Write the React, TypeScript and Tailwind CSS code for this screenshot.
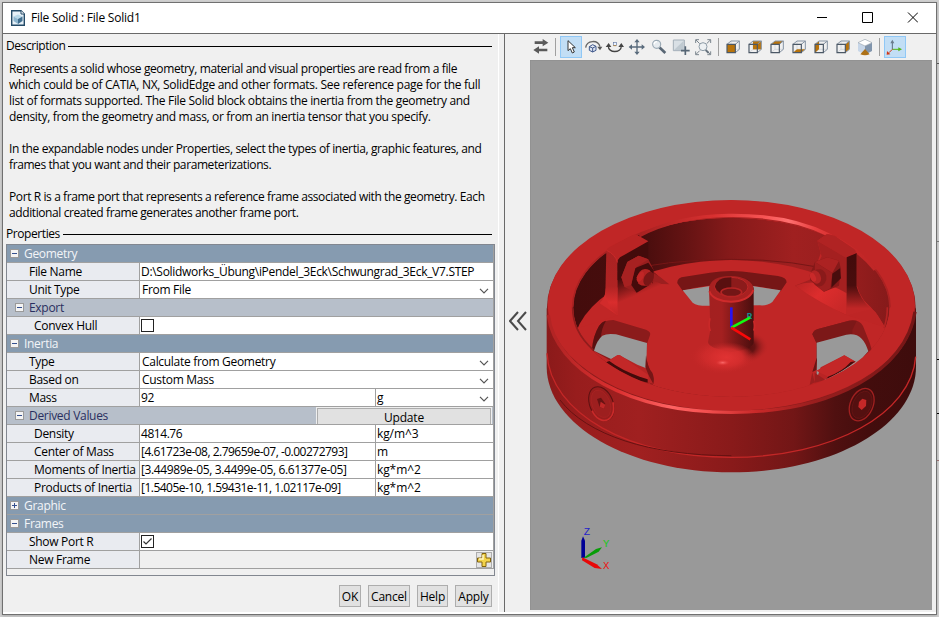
import type { ReactNode } from "react";

const lines: [string, string][] = [
  ["Represents a solid whose geometry, material and visual properties are read from a file", "tracking-[-0.395px]"],
  ["which could be of CATIA, NX, SolidEdge and other formats. See reference page for the full", "tracking-[-0.29px]"],
  ["list of formats supported. The File Solid block obtains the inertia from the geometry and", "tracking-[-0.32px]"],
  ["density, from the geometry and mass, or from an inertia tensor that you specify.", "tracking-[-0.325px]"],
  ["", ""],
  ["In the expandable nodes under Properties, select the types of inertia, graphic features, and", "tracking-[-0.385px]"],
  ["frames that you want and their parameterizations.", "tracking-[-0.4px]"],
  ["", ""],
  ["Port R is a frame port that represents a reference frame associated with the geometry. Each", "tracking-[-0.4px]"],
  ["additional created frame generates another frame port.", "tracking-[-0.4px]"],
];

function Legend({ children }: { children: ReactNode }) {
  return (
    <div className="flex h-4 items-center gap-[3px] pr-[5px] pl-[3px] tracking-[-0.42px]">
      <span>{children}</span>
      <span className="h-px grow bg-black" />
    </div>
  );
}

function Toggle({ plus }: { plus?: boolean }) {
  return (
    <svg className="h-[9px] w-[9px] shrink-0" viewBox="0 0 9 9" shapeRendering="crispEdges">
      <rect width="9" height="9" fill="#9a9a9a" />
      <rect x="1" y="1" width="7" height="7" fill="#f4f4f4" />
      <rect x="2" y="4" width="5" height="1" fill="#34508f" />
      {plus && <rect x="4" y="2" width="1" height="5" fill="#34508f" />}
    </svg>
  );
}

function Section({ title, plus }: { title: string; plus?: boolean }) {
  return (
    <div className="flex h-[18px] items-center gap-[5px] border-b border-[#a0a0a0] bg-[#869bb0] pl-[3px] text-[#f3f5f8]">
      <Toggle plus={plus} />
      <span>{title}</span>
    </div>
  );
}

function Sub({ title, button }: { title: string; button?: string }) {
  return (
    <div className="flex h-[18px] items-center gap-[5px] border-b border-[#a0a0a0] bg-[#b7bfca] pl-2 text-[#2a2f60]">
      <Toggle />
      <span className="grow">{title}</span>
      {button && (
        <span className="mr-[1px] flex h-[17px] w-[176px] border-t border-r border-l border-[#efefef] bg-[#e1e1e1] text-black">
          <span className="grow border border-b-0 border-[#adadad] text-center leading-[17px] tracking-[-0.2px]">{button}</span>
        </span>
      )}
    </div>
  );
}

function Row({ label, value, unit, select, deep, tight = "", children }: {
  label: string; value?: string; unit?: string; select?: boolean; deep?: boolean; tight?: string; children?: ReactNode;
}) {
  const chevron = (
    <svg className="mt-[3px] mr-1 h-[6px] w-[10px] shrink-0" viewBox="0 0 10 6">
      <path d="M1 .8 5 4.8 9 .8" fill="none" stroke="#555" strokeWidth="1.2" />
    </svg>
  );
  return (
    <div className="flex h-[18px] border-b border-[#a0a0a0] bg-white leading-[17px] whitespace-nowrap">
      <div className={`w-[133px] shrink-0 border-r border-[#a0a0a0] bg-[#e9ebf0] ${deep ? "pl-[27px]" : "pl-[22px]"}`}>{label}</div>
      {children ?? (
        <div className={`flex min-w-0 grow items-center justify-between ${select && !unit ? "pl-[2px]" : "pl-px"}`}>
          <span className={tight}>{value}</span>
          {select && !unit && chevron}
        </div>
      )}
      {unit && (
        <div className="flex w-[118px] shrink-0 items-center justify-between border-l border-[#a0a0a0] pl-px tracking-[-0.1px]">
          <span>{unit}</span>
          {select && chevron}
        </div>
      )}
    </div>
  );
}

function Check({ on }: { on?: boolean }) {
  return (
    <div className="flex grow items-center pl-px">
      <svg className="h-[13px] w-[13px]" viewBox="0 0 13 13">
        <rect x=".5" y=".5" width="12" height="12" fill="#fff" stroke="#222" />
        {on && <path d="M2.5 6.5 5 9 10.5 3.5" fill="none" stroke="#333" strokeWidth="1.2" />}
      </svg>
    </div>
  );
}

function Tool({ active, children }: { active?: boolean; children: ReactNode }) {
  return (
    <span className={`h-[22px] w-[22px] shrink-0 ${active ? "bg-[#c2def5] outline-1 -outline-offset-1 outline-[#90c8f6]" : ""}`}>
      <svg className="h-[22px] w-[22px]" viewBox="0 0 66 66" fill="none">{children}</svg>
    </span>
  );
}

function Divider({ className }: { className: string }) {
  return <span className={`h-[18px] w-px shrink-0 bg-[#a0a0a0] ${className}`} />;
}

const faces: Record<string, string> = {
  front: "M15 25H40V50H15Z",
  back: "M27 15H52V40H27Z",
  top: "M15 25 27 15H52L40 25Z",
  bottom: "M15 50 27 40H52L40 50Z",
  left: "M15 25 27 15V40L15 50Z",
  right: "M40 25 52 15V40L40 50Z",
};

function Cube({ face }: { face: string }) {
  return (
    <Tool>
      <path d="M27 15V40H52M27 40 15 50" stroke="#c9ced4" strokeWidth="2" />
      <path d={faces[face]} fill="#b8730b" />
      <path d="M15 25 27 15H52V40L40 50M40 25 52 15" stroke="#8593a3" strokeWidth="3" />
      <path d="M15 25H40V50H15Z" stroke="#4b5866" strokeWidth="3.5" />
    </Tool>
  );
}

function Toolbar() {
  return (
    <div className="flex h-[26px] items-center pb-px">
      <Tool>
        <path d="M14 16H38V9L55 20 38 31V24H14Z" fill="#5a5a5a" />
        <path d="M52 38H27V31L10 42 27 53V46H52Z" fill="#5a5a5a" />
      </Tool>
      <Divider className="mr-1 ml-[3px]" />
      <Tool active>
        <path d="M24 14V44L31 38 37 51 43 48 37 35H46Z" fill="#fff" stroke="#333" strokeWidth="3" />
      </Tool>
      <Tool>
        <path d="M11 35C14 12 48 10 54 32" stroke="#666" strokeWidth="4" />
        <path d="M46 32H61L54 43Z" fill="#555" />
        <path d="M22 32 32 26 42 31V43L32 48 22 43ZM22 32 32 36 42 31M32 36V48" fill="#dbe3f1" stroke="#40588b" strokeWidth="3" />
      </Tool>
      <Tool>
        <path d="M13 30C12 52 52 52 52 30" stroke="#444" strokeWidth="4" />
        <path d="M5 33 14 21 22 33ZM43 33 52 21 60 33Z" fill="#444" />
        <rect x="28" y="19" width="9" height="9" fill="#edf3ff" stroke="#667ba5" strokeWidth="2" />
        <path d="M28 29H37" stroke="#b8730b" strokeWidth="2" />
      </Tool>
      <Tool>
        <path d="M33 15V52M14 33H51" stroke="#596b7c" strokeWidth="4" />
        <path d="M25 19 33 9 41 19ZM25 47 33 57 41 47ZM18 25 8 33 18 41ZM47 25 57 33 47 41Z" fill="#596b7c" />
      </Tool>
      <Tool>
        <path d="M34 34 52 51" stroke="#596775" strokeWidth="8" />
        <circle cx="26" cy="25" r="12" fill="#e6ebef" stroke="#9baab5" strokeWidth="3.5" />
        <path d="M18 25Q19 17 27 17" stroke="#fff" strokeWidth="4" />
      </Tool>
      <Tool>
        <path d="M10 12H43V44H10Z" fill="#d9e0e5" stroke="#a4afb9" strokeWidth="3" />
        <path d="M12 42 41 14V42Z" fill="#bfc9d0" />
        <path d="M46 31V57M33 44H59" stroke="#566675" strokeWidth="5" />
      </Tool>
      <Tool>
        <path d="M11 21V11H21M46 11H56V21M56 46V56H46M21 56H11V46M12 12 23 23M55 12 44 23M12 55 23 44M55 55 44 44" stroke="#7b858e" strokeWidth="3" />
        <path d="M40 41 50 51" stroke="#66727d" strokeWidth="6" />
        <circle cx="33" cy="32" r="12" fill="#eef1f3" stroke="#8f9da8" strokeWidth="3" />
      </Tool>
      <Divider className="mr-[3px] ml-1" />
      <Cube face="front" /><Cube face="back" /><Cube face="top" />
      <Cube face="bottom" /><Cube face="left" /><Cube face="right" />
      <Tool>
        <path d="M12 20 33 28V56L12 45Z" fill="#c7d6e8" />
        <path d="M54 20 33 28V56L54 45Z" fill="#8195ad" />
        <path d="M12 20 33 10 54 20 33 30Z" fill="#fff" stroke="#9aa5af" strokeWidth="2" />
        <path d="M33 39 19 55Q33 61 47 55Z" fill="#ad7117" />
      </Tool>
      <Divider className="mr-[4px] ml-[3px]" />
      <Tool active>
        <path d="M25 40V15" stroke="#5b6c80" strokeWidth="3" />
        <path d="M19 22 25 11 31 22Z" fill="#6a7b8c" />
        <path d="M25 40H48" stroke="#52b51c" strokeWidth="3" />
        <path d="M43 34V46L54 40Z" fill="#52b51c" />
        <path d="M25 40 15 50" stroke="#d23615" strokeWidth="3" />
        <path d="M9 45 19 55 8 56Z" fill="#d23615" />
      </Tool>
    </div>
  );
}

function Wheel() {
  return (
    <svg className="block h-[550px] w-[402px]" viewBox="0 -360 1206 1650">
      <defs>
        <linearGradient id="side" gradientUnits="userSpaceOnUse" x1="51" x2="1158" y1="0" y2="0">
          <stop offset="0" stopColor="#8b1a1a" /><stop offset=".08" stopColor="#981d1d" />
          <stop offset=".25" stopColor="#a02020" /><stop offset=".5" stopColor="#891a1a" />
          <stop offset=".67" stopColor="#721616" /><stop offset=".78" stopColor="#501010" />
          <stop offset=".87" stopColor="#430d0d" /><stop offset="1" stopColor="#3e0c0c" />
        </linearGradient>
        <linearGradient id="wall" gradientUnits="userSpaceOnUse" x1="128" x2="1075" y1="0" y2="0">
          <stop offset="0" stopColor="#440c0c" /><stop offset=".22" stopColor="#470d0d" />
          <stop offset=".36" stopColor="#651313" /><stop offset=".5" stopColor="#861a1a" />
          <stop offset=".7" stopColor="#a02020" /><stop offset=".87" stopColor="#981e1e" />
          <stop offset="1" stopColor="#861a1a" />
        </linearGradient>
        <linearGradient id="backLight" gradientUnits="userSpaceOnUse" x1="330" x2="1060" y1="0" y2="0">
          <stop offset="0" stopColor="#a82121" /><stop offset=".3" stopColor="#d83030" />
          <stop offset=".52" stopColor="#f85656" /><stop offset=".61" stopColor="#ff7070" />
          <stop offset=".72" stopColor="#e83e3e" /><stop offset=".85" stopColor="#c72828" /><stop offset="1" stopColor="#bd2626" />
        </linearGradient>
        <linearGradient id="frontLight" gradientUnits="userSpaceOnUse" x1="80" x2="1150" y1="0" y2="0">
          <stop offset="0" stopColor="#b32424" /><stop offset=".17" stopColor="#dc3030" />
          <stop offset=".32" stopColor="#ff6262" /><stop offset=".4" stopColor="#f85555" />
          <stop offset=".56" stopColor="#c92929" /><stop offset=".72" stopColor="#9a1e1e" /><stop offset="1" stopColor="#741616" />
        </linearGradient>
        <linearGradient id="hub" x1="0" x2="1" y1="0" y2="0">
          <stop offset="0" stopColor="#a32020" /><stop offset=".3" stopColor="#a42020" />
          <stop offset=".62" stopColor="#791717" /><stop offset="1" stopColor="#4a0e0e" />
        </linearGradient>
        <linearGradient id="fillet" x1="0" x2="1" y1="0" y2=".6">
          <stop offset="0" stopColor="#b82424" /><stop offset=".5" stopColor="#dd2d2d" /><stop offset="1" stopColor="#c92828" />
        </linearGradient>
        <linearGradient id="post" x1="0" x2="0" y1="0" y2="1">
          <stop offset="0" stopColor="#a92222" /><stop offset=".55" stopColor="#b02323" /><stop offset=".8" stopColor="#d92d2d" /><stop offset="1" stopColor="#c02626" />
        </linearGradient>
        <linearGradient id="postDark" gradientUnits="userSpaceOnUse" x1="0" x2="0" y1="232" y2="385">
          <stop offset="0" stopColor="#430b0b" /><stop offset=".55" stopColor="#490d0d" /><stop offset="1" stopColor="#c02626" />
        </linearGradient>
        <linearGradient id="plateDark" gradientUnits="userSpaceOnUse" x1="285" x2="310" y1="290" y2="350">
          <stop offset="0" stopColor="#430b0b" /><stop offset="1" stopColor="#c02626" />
        </linearGradient>
        <radialGradient id="base"><stop offset="0" stopColor="#e23333" /><stop offset=".55" stopColor="#d42d2d" /><stop offset="1" stopColor="#c02626" stopOpacity="0" /></radialGradient>
        <radialGradient id="glow"><stop offset="0" stopColor="#fb6a6a" /><stop offset="1" stopColor="#e63535" stopOpacity="0" /></radialGradient>
        <radialGradient id="shade"><stop offset="0" stopColor="#3e0a0a" /><stop offset=".5" stopColor="#551010" stopOpacity=".85" /><stop offset="1" stopColor="#c02626" stopOpacity="0" /></radialGradient>
        <clipPath id="bore"><ellipse cx="604" cy="382" rx="475" ry="269" /></clipPath>
      </defs>
      <rect y="-360" width="1206" height="1650" fill="#999" />
      <path d="M0 1290V-360H1206" fill="none" stroke="#8c8c8c" strokeWidth="3" />

      <path d="M50 385V560C50 735 298 877 604 877S1158 735 1158 560V385Z" fill="url(#side)" />
      <path d="M51 520C60 700 298 832 604 832S1145 700 1157 530" fill="none" stroke="#c32727" strokeWidth="4" />
      <path d="M90 660C170 765 360 827 604 827" fill="none" stroke="#671212" strokeWidth="3" />
      <ellipse cx="604" cy="382" rx="553" ry="320" fill="#8d1c1c" />
      <ellipse cx="604" cy="376" rx="551" ry="316" fill="#c02626" />
      <path d="M55 405C75 570 298 697 604 697S1130 570 1155 395" fill="none" stroke="url(#frontLight)" strokeWidth="10" />

      <g clipPath="url(#bore)">
        <ellipse cx="604" cy="382" rx="475" ry="269" fill="url(#wall)" />
        <ellipse cx="604" cy="509" rx="475" ry="269" fill="#c02626" />
        <path d="M240 280Q410 238 604 238T940 280" fill="none" stroke="#761616" strokeWidth="3" />

        <path d="M442 310Q440 292 464 290L540 278Q604 268 668 278L744 288Q770 292 770 307L752 334Q604 292 458 332Z" fill="#761616" />
        <path d="M458 331 545 317H662L752 331 727 366Q712 378 690 376L545 377Q505 380 488 368Z" fill="#999" />

        <path d="M186 510Q188 470 207 438Q218 420 250 420L348 449Q364 456 360 466L352 488 348 525Q352 560 372 598L368 615Z" fill="#8b1b1b" />
        <path d="M186 510Q188 470 207 438Q215 425 228 422Q213 447 213 474L194 512Z" fill="#5a1010" />
        <path d="M192 512Q201 480 217 467Q232 459 258 463L351 489 348 580 300 565Z" fill="#999" />
        <path d="M230 545 262 526Q268 523 277 530L322 554 345 563Q364 570 370 590L371 612 350 606Z" fill="#b52424" />
        <path d="M230 545 262 526Q268 523 277 530L355 585V600L330 592Z" fill="#c32828" />
        <path d="M228 547Q275 580 330 602L353 608V598L329 590Q275 571 238 543Z" fill="#430b0b" />
        <path d="M348 525Q352 562 367 578Q374 594 370 612L357 588 346 562Z" fill="#751616" />

        <g transform="translate(597 0)">
          <path d="M250 463Q254 450 267 447L360 422Q390 416 402 438L422 488 430 515 262 600 262 488Z" fill="#8b1b1b" />
          <path d="M250 463Q254 450 267 447L360 422Q375 421 383 423L370 450 370 461 262 488Z" fill="#7c1818" />
          <path d="M263 488 352 464Q382 459 398 476Q410 488 418 514L340 600H263Z" fill="#999" />
          <path d="M262 600 275 562 346 526 380 545 292 600 244 616Z" fill="#b92424" />
          <path d="M346 526 380 545 300 592 262 572Z" fill="#c42727" />
          <path d="M379 544Q345 574 292 597L297 590Q340 575 365 546Z" fill="#430b0b" />
          <path d="M250 577 257 607 242 615ZM257 578 290 600 257 608Z" fill="#9c1f1f" />
          <path d="M262 488 264 540 262 570 250 576 258 550 264 530Z" fill="#6b1414" />
        </g>
      </g>
      <path d="M128 382C128 233 341 111 604 111S1080 233 1080 382" fill="none" stroke="#a92222" strokeWidth="5" />
      <path d="M328 167Q440 108 597 106Q775 104 895 164Q985 206 1035 269" fill="none" stroke="url(#backLight)" strokeWidth="10" />
      <path d="M128 382Q127 454 190 510" fill="none" stroke="#901c1c" strokeWidth="5" />
      <path d="M1072 382Q1072 415 1062 444" fill="none" stroke="#b22323" strokeWidth="5" />

      <path d="M262 237 355 184V270L374 278 415 313 340 360 262 405Z" fill="url(#plateDark)" />
      <path d="M366 276Q392 290 418 313L395 312 366 300Z" fill="#9c1f1f" />
      <path d="M230 213Q229 207 237 202L310 164Q318 162 326 167L355 184 270 232Q262 239 262 250Z" fill="#b92424" />
      <path d="M228 323V350L262 406 205 425 148 443Q174 400 209 370Q228 350 228 323Z" fill="#c02626" />
      <path d="M209 370Q228 350 228 323L262 300V406Z" fill="#d22b2b" />
      <path d="M229 212Q258 222 262 250V406L240 385 226 345Z" fill="url(#post)" />
      <path d="M230 211Q257 224 262 247" stroke="#c92929" strokeWidth="3" fill="none" />
      <path d="M274 292 292 246 326 227 355 238 371 270 366 309 320 338 284 322Z" fill="#981e1e" />
      <path d="M292 246 326 227 355 238 314 265Z" fill="#a82121" />
      <path d="M314 265 355 248 371 271 368 309 320 338 304 315Z" fill="#450b0b" />
      <path d="M274 292 292 246 326 228 340 240 316 265 303 315 284 322Z" fill="#a72121" />
      <path d="M320 292 329 275Q340 262 359 271L372 290 366 311Q343 324 325 311Z" fill="#b12222" />
      <ellipse cx="356" cy="296" rx="14" ry="22" transform="rotate(27 356 296)" fill="#781616" />
      <ellipse cx="331" cy="290" rx="9" ry="17" transform="rotate(27 331 290)" fill="#c02626" />

      <g transform="translate(597 0)">
        <path d="M265 182 293 163Q300 160 317 167L372 206Q384 213 384 226V318Q395 360 440 397L468 442 352 405Q265 365 198 317L246 300 275 220Z" fill="#be2525" />
        <path d="M265 182 353 233V405Q293 375 198 317L242 299 278 229Z" fill="#a42020" />
        <path d="M198 317Q270 290 353 340V405Q275 370 198 317Z" fill="url(#fillet)" />
        <path d="M265 182 293 163 317 167 375 207Q384 215 378 219L353 235Z" fill="#b02323" />
        <path d="M353 232 383 219V320Q392 353 425 387L353 406Z" fill="url(#postDark)" />
        <path d="M247 273 258 246 295 232 330 242 336 267 330 317 285 335 258 314Z" fill="#851919" />
        <path d="M258 246 295 232 330 242 310 279Z" fill="#ac2222" />
        <path d="M258 246 310 279 304 325 285 335 256 312Z" fill="#9e1f1f" />
        <path d="M310 281 333 265 336 295 307 323Z" fill="#480d0d" />
        <path d="M242 285Q251 267 276 268Q295 277 292 299Q283 324 263 318L244 301Z" fill="#8a1a1a" />
        <ellipse cx="260" cy="291" rx="15" ry="21" transform="rotate(-25 260 291)" fill="#b22424" />
        <ellipse cx="252" cy="292" rx="8" ry="14" transform="rotate(-25 252 292)" fill="#c92929" />
      </g>

      <ellipse cx="632" cy="500" rx="85" ry="52" fill="url(#shade)" />
      <ellipse cx="575" cy="530" rx="95" ry="54" fill="url(#base)" opacity=".8" />
      <path d="M537 325Q542 288 603 288T671 325V483Q674 507 603 516Q535 505 534 486L540 455V415Z" fill="url(#hub)" />
      <ellipse cx="590" cy="532" rx="85" ry="46" fill="url(#base)" opacity=".9" />
      <ellipse cx="604" cy="327" rx="67" ry="39" fill="#a82121" />
      <path d="M538 334C550 374 655 378 670 330" fill="none" stroke="#ce2b2b" strokeWidth="6" />
      <ellipse cx="604" cy="321" rx="50" ry="29" fill="#8c1b1b" stroke="#bd2626" strokeWidth="3" />
      <path d="M555 320Q560 292 604 292V349Q563 344 555 320Z" fill="#591010" />
      <ellipse cx="604" cy="337" rx="31" ry="13" fill="#731616" stroke="#b52424" strokeWidth="5" />
      <ellipse cx="578" cy="548" rx="22" ry="9" fill="url(#glow)" />
      <path d="M540 415Q534 438 541 453M671 422Q677 440 671 452" stroke="#c92929" strokeWidth="5" fill="none" />

      <g transform="rotate(-22 214 671)">
        <ellipse cx="214" cy="671" rx="35" ry="53" fill="#981d1d" stroke="#5d1111" strokeWidth="3" />
        <path d="M180 680C184 735 238 739 248 680" fill="none" stroke="#c92a2a" strokeWidth="5" />
        <ellipse cx="213" cy="671" rx="27" ry="43" fill="#9d1f1f" stroke="#ac2323" strokeWidth="2" />
      </g>
      <path d="M201 657 213 653 226 671 222 686 209 681Z" fill="#681313" />
      <path d="M209 681 212 665 226 674 222 686Z" fill="#bf2828" />
      <g transform="rotate(24 995 674)">
        <ellipse cx="995" cy="674" rx="34" ry="51" fill="#4b0e0e" stroke="#a02020" strokeWidth="4" />
        <ellipse cx="996" cy="674" rx="27" ry="43" fill="#541010" stroke="#6c1515" strokeWidth="2" />
      </g>
      <path d="M987 666 997 656 1009 660 1008 678 995 690 985 681Z" fill="#c52828" />

      <text x="650" y="417" fill="#168b91" className="font-['Liberation_Mono'] text-[27px] font-bold">R</text>
      <path d="M604 443V382" stroke="#2814ef" strokeWidth="8" />
      <path d="M604 443 660 413" stroke="#11fa11" strokeWidth="8" />
      <path d="M604 443 661 478" stroke="#fa0808" strokeWidth="8" />

      <g transform="translate(90 990)">
        <path d="M64 144V92L69 79 75 92V143Z" fill="#000096" />
        <path d="M71 143 108 117 126 112 116 125 79 144Z" fill="#089d08" />
        <path d="M67 142 110 163 126 177 104 174 66 151Z" fill="#e80808" />
        <g className="font-['Liberation_Mono'] text-[32px]">
          <text x="71" y="76" fill="#2222c9">Z</text>
          <text x="129" y="110" fill="#18c818">Y</text>
          <text x="129" y="178" fill="#ee1111">X</text>
        </g>
      </g>
    </svg>
  );
}

export default function App() {
  return (
    <div className="flex h-[617px] w-[939px] overflow-hidden bg-[#d2d2d2] pt-[2px] pl-[2px] font-['Open_Sans','Noto_Sans',sans-serif] text-[12px] leading-4 tracking-[-0.3px] text-black">
      <div className="flex h-[613px] w-[935px] shrink-0 flex-col border border-[#707070] bg-white shadow-[0_1px_3px_#8888]">
        <header className="flex h-[31px] shrink-0 items-center border-b border-[#696969] pl-2">
          <svg className="h-4 w-[14px]" viewBox="0 0 14 16">
            <path d="M.7.7H10L13.3 4V15.3H.7Z" fill="#e7f1f8" stroke="#244b68" strokeWidth="1.4" />
            <path d="M10 .7V4H13.3" fill="#fff" stroke="#244b68" />
            <path d="M2.5 6.5 7 4.5 11.5 6.5 7 9Z" fill="#b9d9ea" />
            <path d="M2.5 6.5 7 9V14L2.5 11Z" fill="#8eb6cf" /><path d="M7 9 11.5 6.5V11L7 14Z" fill="#416f90" />
          </svg>
          <h1 className="ml-[6px] grow tracking-[-0.22px]">File Solid : File Solid1</h1>
          <svg className="mr-[18px] mb-[2px] h-[11px] w-[101px]" viewBox="0 0 101 11" fill="none" stroke="#000">
            <path d="M0 5.5H10M45.500 .5H55.500V10.500H45.500Z" /><path d="M91 .5 101 10.500M101 .5 91 10.500" />
          </svg>
        </header>
        <div className="flex h-[578px] shrink-0 bg-[#f0f0f0]">
          <section className="flex w-[496px] shrink-0 flex-col border-r border-white pt-1 pr-px">
            <Legend>Description</Legend>
            <div className="flex h-[172px] flex-col pt-[7px] pl-[6px] whitespace-nowrap">
              {lines.map(([line, tracking], i) => <p key={i} className={`h-4 shrink-0 ${tracking}`}>{line}</p>)}
            </div>
            <Legend>Properties</Legend>
            <div className="mt-[2px] ml-[3px] h-[332px] w-[489px] border border-[#828790]">
              <div className="w-[487px] border-r border-[#a0a0a0]">
                <Section title="Geometry" />
                <Row label="File Name" value="D:\Solidworks_Übung\iPendel_3Eck\Schwungrad_3Eck_V7.STEP" />
                <Row label="Unit Type" value="From File" select />
                <Sub title="Export" />
                <Row label="Convex Hull" deep><Check /></Row>
                <Section title="Inertia" />
                <Row label="Type" value="Calculate from Geometry" select />
                <Row label="Based on" value="Custom Mass" select />
                <Row label="Mass" value="92" unit="g" select />
                <Sub title="Derived Values" button="Update" />
                <Row label="Density" value="4814.76" tight="tracking-[-0.45px]" unit="kg/m^3" deep />
                <Row label="Center of Mass" value="[4.61723e-08, 2.79659e-07, -0.00272793]" tight="tracking-[-0.51px]" unit="m" deep />
                <Row label="Moments of Inertia" value="[3.44989e-05, 3.4499e-05, 6.61377e-05]" tight="tracking-[-0.36px]" unit="kg*m^2" deep />
                <Row label="Products of Inertia" value="[1.5405e-10, 1.59431e-11, 1.02117e-09]" tight="tracking-[-0.52px]" unit="kg*m^2" deep />
                <Section title="Graphic" plus />
                <Section title="Frames" />
                <Row label="Show Port R"><Check on /></Row>
                <Row label="New Frame">
                  <div className="flex grow items-center justify-end bg-[#f0f0f0] pr-px">
                    <svg className="h-4 w-4" viewBox="0 0 16 16">
                      <rect x=".5" y=".5" width="15" height="15" fill="#e5e5e5" stroke="#adadad" />
                      <path d="M6 1.500H10V6H14.500V10H10V14.500H6V10H1.500V6H6Z" fill="#f2d34a" stroke="#81620f" />
                      <path d="M7 3V7H3" fill="none" stroke="#fff6c6" strokeWidth="1.500" />
                    </svg>
                  </div>
                </Row>
              </div>
            </div>
            <div className="mt-[9px] mr-[5px] flex justify-end gap-[7px] tracking-[-0.2px]">
              {[["OK", "w-[22px]"], ["Cancel", "w-[42px]"], ["Help", "w-[31px]"], ["Apply", "w-[37px]"]].map(([name, width]) => (
                <button key={name} className={`flex h-[22px] items-center justify-center border border-[#adadad] bg-[#e1e1e1] pt-px ${width}`}>{name}</button>
              ))}
            </div>
          </section>
          <section className="ml-[5px] flex grow border-l border-[#696969]">
            <div className="flex w-[25px] shrink-0 items-center justify-center pb-1">
              <svg className="h-5 w-[18px]" viewBox="0 0 18 20" fill="none" stroke="#4a4a4a" strokeWidth="2">
                <path d="M9 1 1 10 9 19M17 1 9 10 17 19" />
              </svg>
            </div>
            <div className="w-[402px] shrink-0">
              <Toolbar />
              <Wheel />
            </div>
          </section>
        </div>
      </div>
      <div className="flex grow flex-col items-end pt-[61px]">
        <span className="h-px w-[2px] bg-[#555]" />
        <span className="mt-[177px] h-px w-[2px] bg-[#777]" />
        <span className="mt-[117px] h-px w-[2px] bg-black" />
        <span className="mt-[53px] h-px w-[2px] bg-black" />
        <span className="mt-[46px] h-px w-[2px] bg-[#9b7070]" />
      </div>
    </div>
  );
}
